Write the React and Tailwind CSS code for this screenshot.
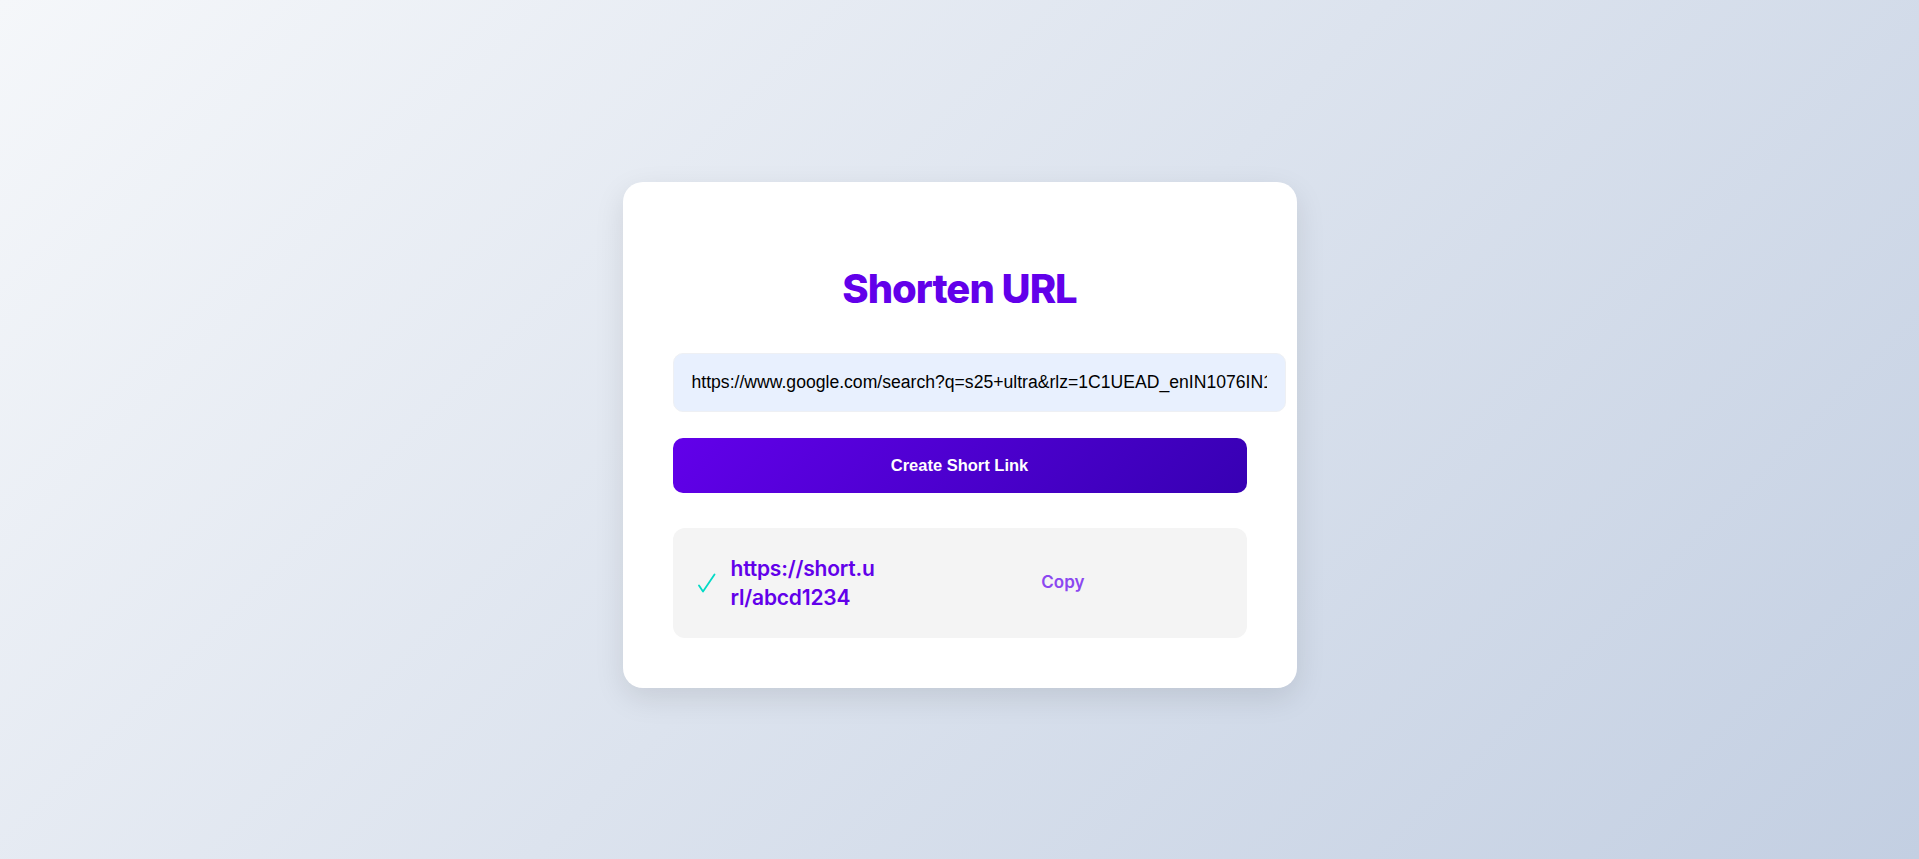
import { useState } from "react";

function App() {
  const [url, setUrl] = useState(
    "https://www.google.com/search?q=s25+ultra&rlz=1C1UEAD_enIN1076IN1076&oq=s25+ultra"
  );
  const shortUrl = "https://short.url/abcd1234";

  return (
    <div className="min-h-screen w-full flex items-center justify-center bg-[linear-gradient(135deg,#f5f7fa_0%,#c3cfe2_100%)] font-['Inter',sans-serif]">
      <div className="w-[674px] bg-white rounded-[20px] shadow-[0_10px_30px_rgba(0,0,0,0.1)] px-[50px] pt-[50px] pb-[50px] mt-[11px]">
        <h1 className="text-center text-[40px] leading-[48px] font-extrabold text-[#6200ea] mt-[33px] mb-[40px] tracking-[-1px]">
          Shorten URL
        </h1>

        <input
          type="text"
          value={url}
          onChange={(e) => setUrl(e.target.value)}
          className="box-content w-[575px] -mr-[37px] h-[23px] py-[17px] px-[18px] bg-[#e8f0fe] border border-[#eef0f4] rounded-[10px] text-[17.6px] text-black font-['Liberation_Sans',Arial,sans-serif] outline-none"
        />

        <button className="mt-[26px] w-full h-[55px] rounded-[10px] bg-[linear-gradient(135deg,#6200ea,#3700b3)] text-white font-bold text-[16.5px] font-['Liberation_Sans',Arial,sans-serif]">
          Create Short Link
        </button>

        <div className="mt-[35px] h-[110px] bg-[#f4f4f4] rounded-[12px] flex items-center pl-[25px]">
          <svg width="18" height="20" viewBox="0 0 18 20" className="mr-[15px] shrink-0" fill="none">
            <path d="M1 12.5 L5 18.5 L16.5 1.5" stroke="#03dac6" strokeWidth="1.8" strokeLinecap="round" strokeLinejoin="round" />
          </svg>
          <a className="w-[151px] break-all text-[21px] leading-[29px] font-semibold text-[#6200ea] tracking-[-0.2px]">
            {shortUrl}
          </a>
          <button className="ml-auto mr-[162px] text-[17px] font-semibold text-[#8b47f0]">
            Copy
          </button>
        </div>
      </div>
    </div>
  );
}

export default App;
